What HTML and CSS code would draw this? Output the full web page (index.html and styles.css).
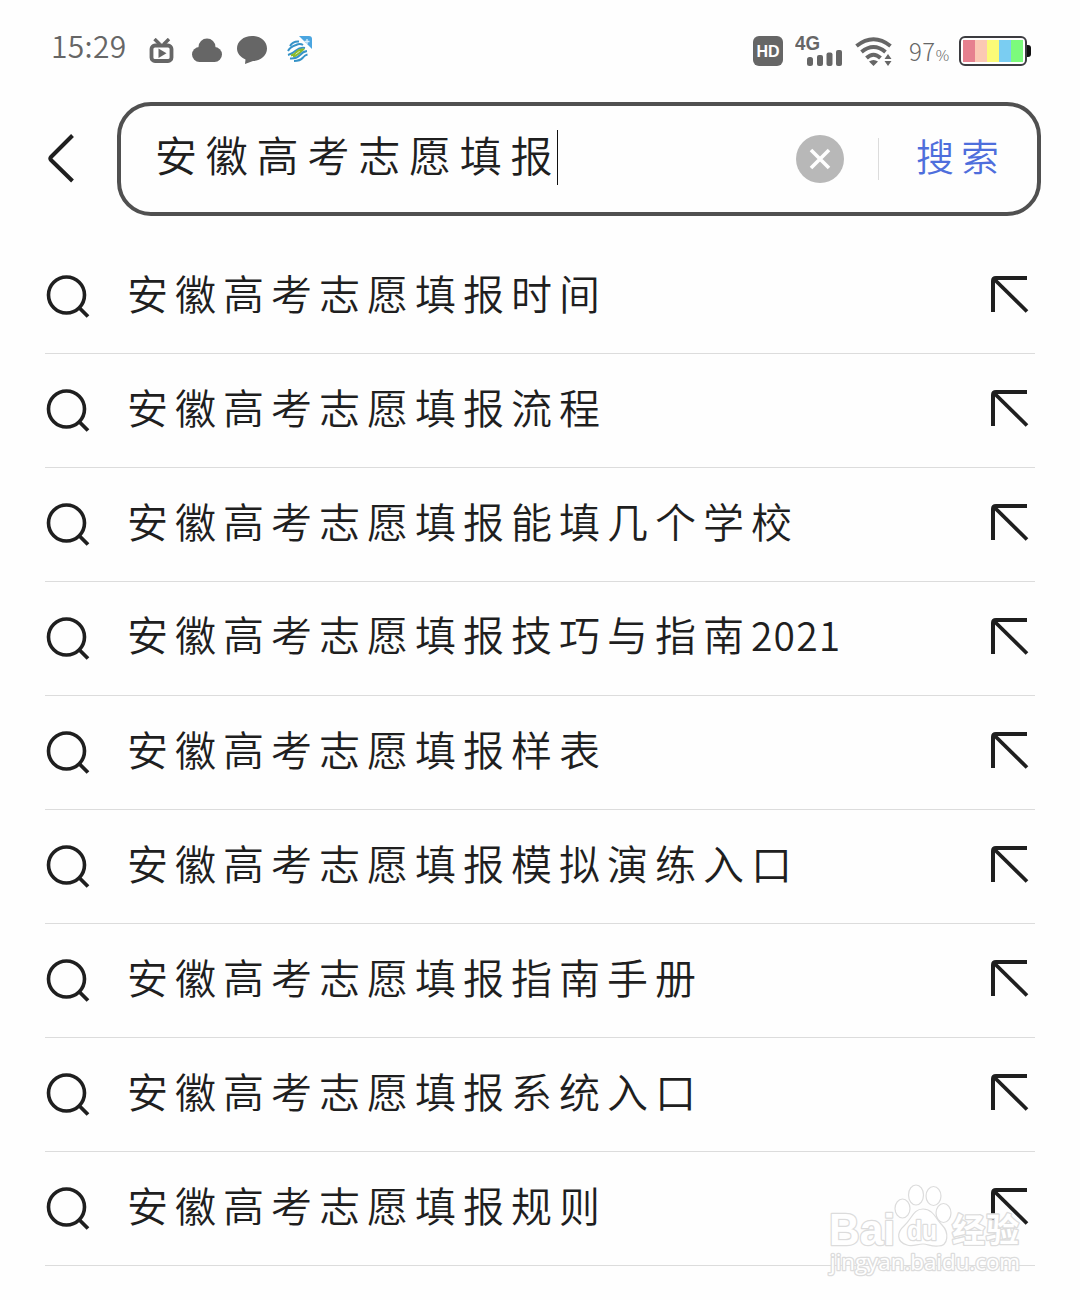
FILE: index.html
```html
<!DOCTYPE html>
<html lang="zh-CN">
<head>
    <meta charset="utf-8">
    <title>搜索</title>
    <link rel="stylesheet" href="styles.css">
</head>
<body>
    <!-- icons shared by every suggestion row -->
    <svg class="defs">
        <symbol id="icon-search" viewBox="0 0 46 46">
            <circle cx="21.5" cy="21" r="18" fill="none" stroke="#1f1f1f" stroke-width="3.6"/>
            <path d="M34 33.500 L43 42.500" fill="none" stroke="#1f1f1f" stroke-width="3.8"/>
        </symbol>
        <symbol id="icon-fill" viewBox="0 0 40 40">
            <path d="M3 38 V7 Q3 4 6 4 H37" fill="none" stroke="#1f1f1f" stroke-width="4"/>
            <path d="M4 5 L37 37.5" fill="none" stroke="#1f1f1f" stroke-width="3.8"/>
        </symbol>
    </svg>

    <div class="status-bar">
        <div class="status-left">
            <span class="clock">15:29</span>
            <svg class="icon-tv" width="26" height="26" viewBox="0 0 26 26">
                <path d="M5.500 1 L11 6.500 M20 1 L14.500 6.500" stroke="#666" stroke-width="3.4" fill="none"/>
                <rect x="2.5" y="7.5" width="20" height="15.5" rx="3.5" fill="none" stroke="#666" stroke-width="3.8"/>
                <path d="M9.5 10.5 L17.500 15.2 L9.5 20 Z" fill="#666"/>
            </svg>
            <svg class="icon-cloud" width="30" height="26" viewBox="0 0 30 26">
                <g fill="#666">
                    <circle cx="15" cy="10" r="8.500"/>
                    <circle cx="7.500" cy="17.500" r="7.500"/>
                    <circle cx="22.500" cy="17.500" r="7.500"/>
                    <rect x="7" y="12" width="16" height="13"/>
                </g>
            </svg>
            <svg class="icon-chat" width="30" height="30" viewBox="0 0 30 30">
                <path d="M15 1 C23.5 1 30 6.500 30 13.500 C30 20.500 23.500 26 16 26 L8 29 L8.500 24.500 C3.500 22 0 18.500 0 13.500 C0 6.500 6.500 1 15 1 Z" fill="#666"/>
            </svg>
            <svg class="icon-mobile" width="26" height="27" viewBox="0 0 26 27">
                <path d="M12 0 H22 Q25 0 25 3 V13 Z" fill="#4aa5e0"/>
                <path d="M20 3 V8 M17.500 5.500 H22.500" stroke="#d9effb" stroke-width="1.300"/>
                <g fill="none" stroke-width="2">
                    <path d="M3 10 Q6 5 12 5.500 M1 15 Q3 11 9 9 Q13 7 16 9" stroke="#3693c8"/>
                    <path d="M1 19 Q5 18 9 14.500 Q13 11 18 12" stroke="#3693c8"/>
                    <path d="M4 19.500 Q8 18 9.500 16 Q12 13 16 13.500 Q10 20 6 20.500" stroke="#8dbb2b"/>
                    <path d="M3 22.500 Q9 23 13 19 Q16 15.500 20 15 M7 25 Q13 25 16 21.500 Q18 19 20.500 18.500" stroke="#3693c8"/>
                </g>
            </svg>
        </div>
        <div class="status-right">
            <svg class="icon-hd" width="30" height="30" viewBox="0 0 30 30">
                <rect width="30" height="30" rx="6" fill="#666"/>
                <text class="hd-text" x="15" y="21" text-anchor="middle">HD</text>
            </svg>
            <svg class="icon-signal" width="48" height="34" viewBox="0 0 48 34">
                <text class="net-text" x="0" y="17" textLength="25" lengthAdjust="spacingAndGlyphs">4G</text>
                <g fill="#666">
                    <rect x="12" y="24" width="6" height="9" rx="2.500"/>
                    <rect x="22" y="22" width="6" height="11" rx="2"/>
                    <rect x="31.500" y="19.500" width="6" height="13.500" rx="2"/>
                    <rect x="41" y="17" width="6" height="16" rx="2"/>
                </g>
            </svg>
            <svg class="icon-wifi" width="38" height="30" viewBox="0 0 38 30">
                <g fill="none" stroke="#666" stroke-width="4">
                    <path d="M1.500 9 Q18.500 -4.500 35.500 9"/>
                    <path d="M6.500 15 Q18.500 5 30.500 15"/>
                    <path d="M11.500 21 Q18.500 14.500 25.500 21"/>
                </g>
                <path d="M14 24.500 Q18.500 21.500 23 24.500 L18.500 29 Z M29.500 22 L33 17 L36.500 22 Z M29.500 24 H36.500 L33 29 Z" fill="#666"/>
            </svg>
            <span class="percent">97<small>%</small></span>
            <div class="battery">
                <div class="battery-body">
                    <i class="cell red"></i><i class="cell peach"></i><i class="cell yellow"></i><i class="cell blue"></i><i class="cell green"></i>
                </div>
                <div class="battery-cap"></div>
            </div>
        </div>
    </div>

    <div class="search-bar">
        <svg class="back" width="30" height="52" viewBox="0 0 30 52">
            <path d="M27.500 2.500 L6 24 Q4.500 25.500 6 27 L27.500 48" fill="none" stroke="#1f1f1f" stroke-width="4"/>
        </svg>
        <div class="search-box">
            <div class="query">安徽高考志愿填报</div>
            <div class="caret"></div>
            <svg class="clear" width="48" height="48" viewBox="0 0 48 48">
                <circle cx="24" cy="24" r="24" fill="#b8b8b8"/>
                <path d="M15 15 L33 33 M33 15 L15 33" stroke="#fff" stroke-width="3.600"/>
            </svg>
            <div class="divider"></div>
            <div class="search-btn">搜索</div>
        </div>
    </div>

    <div class="list">
        <div class="row">
            <svg class="icon-search"><use href="#icon-search"/></svg>
            <div class="text">安徽高考志愿填报时间</div>
            <svg class="icon-fill"><use href="#icon-fill"/></svg>
        </div>
        <div class="row">
            <svg class="icon-search"><use href="#icon-search"/></svg>
            <div class="text">安徽高考志愿填报流程</div>
            <svg class="icon-fill"><use href="#icon-fill"/></svg>
        </div>
        <div class="row">
            <svg class="icon-search"><use href="#icon-search"/></svg>
            <div class="text">安徽高考志愿填报能填几个学校</div>
            <svg class="icon-fill"><use href="#icon-fill"/></svg>
        </div>
        <div class="row">
            <svg class="icon-search"><use href="#icon-search"/></svg>
            <div class="text">安徽高考志愿填报技巧与指南<span class="num">2021</span></div>
            <svg class="icon-fill"><use href="#icon-fill"/></svg>
        </div>
        <div class="row">
            <svg class="icon-search"><use href="#icon-search"/></svg>
            <div class="text">安徽高考志愿填报样表</div>
            <svg class="icon-fill"><use href="#icon-fill"/></svg>
        </div>
        <div class="row">
            <svg class="icon-search"><use href="#icon-search"/></svg>
            <div class="text">安徽高考志愿填报模拟演练入口</div>
            <svg class="icon-fill"><use href="#icon-fill"/></svg>
        </div>
        <div class="row">
            <svg class="icon-search"><use href="#icon-search"/></svg>
            <div class="text">安徽高考志愿填报指南手册</div>
            <svg class="icon-fill"><use href="#icon-fill"/></svg>
        </div>
        <div class="row">
            <svg class="icon-search"><use href="#icon-search"/></svg>
            <div class="text">安徽高考志愿填报系统入口</div>
            <svg class="icon-fill"><use href="#icon-fill"/></svg>
        </div>
        <div class="row">
            <svg class="icon-search"><use href="#icon-search"/></svg>
            <div class="text">安徽高考志愿填报规则</div>
            <svg class="icon-fill"><use href="#icon-fill"/></svg>
        </div>
        <div class="row row-cut">
            <div class="text">安徽高考志愿填报</div>
        </div>
    </div>

    <svg class="watermark" width="200" height="106" viewBox="0 0 200 106">
        <g class="paw">
            <ellipse cx="75.500" cy="33.500" rx="7.500" ry="9.500"/>
            <ellipse cx="89" cy="20" rx="7.500" ry="10"/>
            <ellipse cx="106.500" cy="21" rx="7.500" ry="9.500"/>
            <ellipse cx="116.500" cy="38" rx="7.500" ry="9.500"/>
            <path d="M96 34 C106 34 109 44 115 50 C122 57 122 71 111 71 C105 72 101 69 96 69 C90 69 86 72 80 70 C69 67 70 57 77 51 C85 44 86 34 96 34 Z"/>
        </g>
        <text class="wm-logo" x="2" y="70" textLength="66" lengthAdjust="spacingAndGlyphs">Bai</text>
        <text class="wm-du" x="80" y="65" textLength="30" lengthAdjust="spacingAndGlyphs">du</text>
        <text class="wm-cn" x="125" y="67" textLength="67">经验</text>
        <text class="wm-url" x="3" y="95" textLength="190" lengthAdjust="spacingAndGlyphs">jingyan.baidu.com</text>
    </svg>
</body>
</html>
```
FILE: styles.css
```css
body {
    position: relative;
    width: 1080px;
    height: 1300px;
    margin: 0;
    overflow: hidden;
    background: #fefefe;
    color: #1f1f1f;
    font-family: "Noto Sans CJK SC", sans-serif;
    font-weight: 350;
}
svg {
    display: block;
    flex: none;
}
.defs {
    display: none;
}

/* status bar */
.status-bar {
    display: flex;
    justify-content: space-between;
    box-sizing: border-box;
    height: 102px;
    padding: 35px 49px 0 51px;
    color: #666;
}
.status-left, .status-right {
    display: flex;
    align-items: flex-start;
}
.clock {
    width: 98px;
    font-size: 30px;
    line-height: 20px;
    letter-spacing: 0.3px;
    white-space: nowrap;
}
.icon-tv {
    margin-top: 3px;
}
.icon-cloud {
    margin: 2px 0 0 17px;
}
.icon-chat {
    margin-left: 15px;
}
.icon-mobile {
    margin: 1px 0 0 20px;
}
.icon-hd {
    margin: 1px 12px 0 0;
}
.hd-text {
    fill: #fff;
    font: bold 16px "Liberation Sans", sans-serif;
}
.icon-signal {
    margin: -2px 12px 0 0;
}
.net-text {
    fill: #666;
    font: bold 20px "Liberation Sans", sans-serif;
}
.icon-wifi {
    margin: 2px 16px 0 0;
}
.percent {
    width: 50px;
    font-size: 24px;
    font-weight: 300;
    line-height: 32px;
    letter-spacing: 0.5px;
    white-space: nowrap;
}
.percent small {
    font-size: 15px;
}
.battery {
    display: flex;
    align-items: center;
    margin-top: 1px;
}
.battery-body {
    display: flex;
    box-sizing: border-box;
    width: 68px;
    height: 30px;
    padding: 2px;
    border: 2px solid #3c3c40;
    border-radius: 6px;
}
.battery-cap {
    width: 4px;
    height: 12px;
    border-radius: 0 3px 3px 0;
    background: #111;
}
.cell {
    flex: 1;
}
.red { background: #e6808f; }
.peach { background: #fbc8b4; }
.yellow { background: #fbfb78; }
.blue { background: #7acdf2; }
.green { background: #7cfb7c; }

/* search bar */
.search-bar {
    display: flex;
    align-items: center;
    height: 114px;
    padding-left: 45px;
}
.search-box {
    display: flex;
    align-items: center;
    box-sizing: border-box;
    width: 924px;
    height: 114px;
    margin-left: 42px;
    padding-left: 34px;
    border: 4px solid #505050;
    border-radius: 34px;
}
.query {
    width: 402px;
    padding-bottom: 11px;
    font-size: 42px;
    line-height: 56px;
    letter-spacing: 8.8px;
    white-space: nowrap;
}
.caret {
    width: 1px;
    height: 55px;
    margin-bottom: 3px;
    background: #111;
}
.clear {
    margin-left: 238px;
}
.divider {
    width: 1px;
    height: 42px;
    margin-left: 34px;
    background: #dcdcdc;
}
.search-btn {
    margin-left: 37px;
    padding-bottom: 8px;
    color: #4e6edc;
    font-size: 38px;
    line-height: 56px;
    letter-spacing: 7px;
    white-space: nowrap;
}

/* suggestions */
.list {
    margin: 24px 45px 0;
}
.row {
    display: flex;
    align-items: center;
    box-sizing: border-box;
    height: 114px;
    border-bottom: 1px solid #dcdcdc;
}
.icon-search {
    width: 46px;
    height: 46px;
}
.icon-fill {
    width: 40px;
    height: 40px;
    margin: 0 5px 6px 0;
}
.text {
    flex: 1;
    margin-left: 36px;
    padding-bottom: 10px;
    font-size: 41px;
    line-height: 58px;
    letter-spacing: 7px;
    white-space: nowrap;
}
/* only the top edge of this row is on screen */
.row-cut {
    align-items: flex-start;
    height: 34px;
    padding: 22px 0 0 46px;
    border-bottom: 0;
    overflow: hidden;
}
.num {
    font-size: 39px;
    letter-spacing: 1.2px;
}

/* watermark over the last rows */
.watermark {
    position: absolute;
    left: 827px;
    top: 1175px;
}
.paw, .watermark text {
    fill: rgba(255, 255, 255, 0.6);
    stroke: #dcdcdc;
    stroke-width: 1.2px;
}
.watermark text {
    fill: #fff;
    stroke-width: 2.6px;
    stroke-linejoin: round;
    paint-order: stroke;
}
.wm-logo {
    font: bold 45px "Liberation Sans", sans-serif;
}
.wm-du {
    font: bold 27px "Liberation Sans", sans-serif;
}
.wm-cn {
    font: bold 33px "Noto Sans CJK SC", sans-serif;
}
.wm-url {
    font: 22px "Open Sans", sans-serif;
}
```
